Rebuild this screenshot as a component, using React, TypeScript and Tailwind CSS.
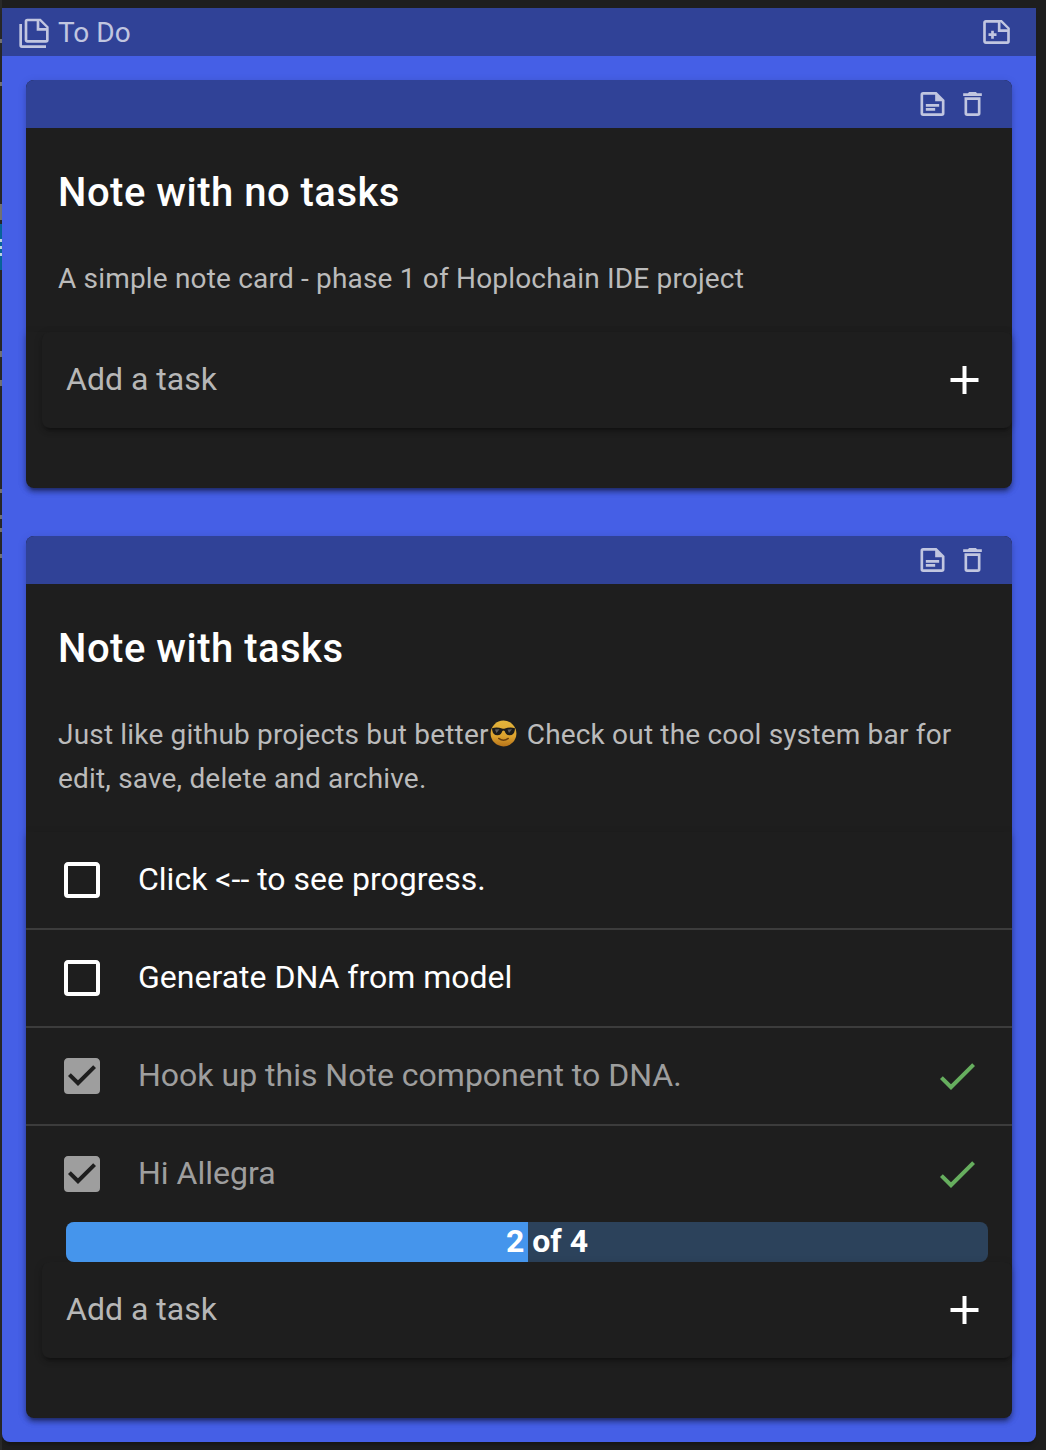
import React from "react";

const ICONS = {
  notes:
    "M3,6V22H21V24H3A2,2 0 0,1 1,22V6H3M16,9H21.5L16,3.5V9M7,2H17L23,8V18A2,2 0 0,1 21,20H7C5.89,20 5,19.1 5,18V4A2,2 0 0,1 7,2M7,4V18H21V11H14V4H7Z",
  notePlus:
    "M15,10H20.5L15,4.5V10M4,3H16L22,9V19A2,2 0 0,1 20,21H4C2.89,21 2,20.1 2,19V5C2,3.89 2.89,3 4,3M4,5V19H20V12H13V5H4M8,17V15H6V13H8V11H10V13H12V15H10V17H8Z",
  noteText:
    "M15,3H5A2,2 0 0,0 3,5V19A2,2 0 0,0 5,21H19A2,2 0 0,0 21,19V9L15,3M19,19H5V5H14V10H19M17,14H7V12H17M14,17H7V15H14",
  trash:
    "M6,19A2,2 0 0,0 8,21H16A2,2 0 0,0 18,19V7H6V19M8,9H16V19H8V9M15.5,4L14.5,3H9.5L8.5,4H5V6H19V4H15.5Z",
  plus: "M19,13H13V19H11V13H5V11H11V5H13V11H19V13Z",
  check: "M21,7L9,19L3.5,13.5L4.91,12.09L9,16.17L19.59,5.59L21,7Z",
  boxOff:
    "M19,3H5C3.89,3 3,3.89 3,5V19A2,2 0 0,0 5,21H19A2,2 0 0,0 21,19V5C21,3.89 20.1,3 19,3M19,5V19H5V5H19Z",
  boxOn:
    "M10,17L5,12L6.41,10.58L10,14.17L17.59,6.58L19,8M19,3H5C3.89,3 3,3.89 3,5V19A2,2 0 0,0 5,21H19A2,2 0 0,0 21,19V5C21,3.89 20.1,3 19,3Z",
};

function Icon({ name, className }: { name: keyof typeof ICONS; className: string }) {
  return (
    <svg viewBox="0 0 24 24" fill="currentColor" className={`shrink-0 ${className}`}>
      <path d={ICONS[name]} />
    </svg>
  );
}

function CoolFace() {
  return (
    <svg viewBox="0 0 27 27" className="mr-[3px] ml-px inline-block size-[27px] align-[-3px]">
      <defs>
        <linearGradient id="face" x1="0" y1="0" x2="0" y2="1">
          <stop offset="0" stopColor="#e3b53c" />
          <stop offset="0.6" stopColor="#dda32e" />
          <stop offset="1" stopColor="#b8741a" />
        </linearGradient>
      </defs>
      <circle cx="13.5" cy="13.5" r="12.9" fill="url(#face)" />
      <path
        d="M2 8.2Q7 6.8 12 8.5Q13.5 9 15 8.5Q20 6.8 25 8.2L24.8 10.3C24.2 13.8 22.6 15.3 19.6 15.3C16.6 15.3 15.3 13.2 14.6 11Q13.5 10 12.4 11C11.7 13.2 10.4 15.3 7.4 15.3C4.4 15.3 2.8 13.8 2.2 10.3Z"
        fill="#1b1b1b"
      />
      <path d="M5 9.6L9.5 9.2L6.5 13ZM17.5 9.6L22 9.2L19 13Z" fill="#5b5b5b" />
      <path d="M8.7 18.4Q13.5 22 18.3 18.4" fill="none" stroke="#6b400d" strokeWidth="1.4" strokeLinecap="round" />
    </svg>
  );
}

function AddTask() {
  return (
    <div className="ml-4 flex h-24 items-center justify-between rounded-lg bg-[#1e1e1e] pr-6 pl-6 text-[32px] text-[#b7b7b7] shadow-[0_6px_2px_-4px_rgba(0,0,0,0.2),0_4px_4px_0_rgba(0,0,0,0.14),0_2px_10px_0_rgba(0,0,0,0.12)]">
      <span className="pb-0.5">Add a task</span>
      <Icon name="plus" className="size-12 translate-x-[0.5px] text-white" />
    </div>
  );
}

function Card({ title, text, children }: { title: string; text: React.ReactNode; children: React.ReactNode }) {
  return (
    <section className="rounded-lg bg-[#1e1e1e] shadow-[0_6px_2px_-4px_rgba(0,0,0,0.2),0_4px_4px_0_rgba(0,0,0,0.14),0_2px_10px_0_rgba(0,0,0,0.12)]">
      <header className="flex h-12 items-center justify-end gap-2 rounded-t-lg bg-[#304297] pr-6 text-[#c1c6e0]">
        <Icon name="noteText" className="size-8 translate-x-[0.5px]" />
        <Icon name="trash" className="size-8 translate-x-[0.5px]" />
      </header>
      <h2 className="px-8 pt-[33px] text-[40px] leading-[64px] font-medium tracking-[0.5px] text-white">{title}</h2>
      <p className="px-8 pt-8 pb-[31px] text-[28px] leading-[44px] tracking-[0.18px] text-[#bbbbbb]">{text}</p>
      <div className="rounded-b-lg pb-[60px] shadow-[0_4px_4px_0_rgba(0,0,0,0.14),0_2px_10px_0_rgba(0,0,0,0.12)]">
        {children}
      </div>
    </section>
  );
}

const TASKS = [
  { text: "Click <-- to see progress.", done: false },
  { text: "Generate DNA from model", done: false },
  { text: "Hook up this Note component to DNA.", done: true },
  { text: "Hi Allegra", done: true },
];

function TaskRow({ text, done }: { text: string; done: boolean }) {
  return (
    <li className="flex h-[98px] items-center border-b-2 border-[#3c3c3c] pr-[31px] pl-8 text-[32px] last:h-24 last:border-b-0">
      <Icon name={done ? "boxOn" : "boxOff"} className={done ? "size-12 text-[#9e9e9e]" : "size-12 text-white"} />
      <span className={done ? "ml-8 grow pb-0.5 text-[#9e9e9e]" : "ml-8 grow pb-0.5 text-white"}>{text}</span>
      {done && <Icon name="check" className="size-12 text-[#66ae5e]" />}
    </li>
  );
}

const UPPER_MARKS = ["mt-[31px] h-1", "mt-[39px] h-1", "mt-[118px] h-4"];
const LOWER_MARKS = ["mt-[81px] h-1.5", "mt-[23px] h-1.5", "mt-[103px] h-1", "mt-[22px] h-1", "mt-[9px] h-1", "mt-[22px] h-1"];

export default function App() {
  return (
    <div className="flex h-[1450px] w-[1046px] overflow-hidden bg-[#1e1e1e] font-['Roboto',sans-serif]">
      <div className="w-0.5 shrink-0 bg-[#292929] pt-2">
        {UPPER_MARKS.map((mark, i) => (
          <div key={i} className={`w-0.5 bg-[#777777] ${mark}`} />
        ))}
        <div className="mt-1 flex h-[46px] flex-col justify-center gap-1 bg-[#0868a0]">
          <div className="h-[3px] bg-[#c5dce8]" />
          <div className="h-[3px] bg-[#c5dce8]" />
          <div className="h-[3px] bg-[#c5dce8]" />
        </div>
        {LOWER_MARKS.map((mark, i) => (
          <div key={i} className={`w-0.5 bg-[#777777] ${mark}`} />
        ))}
      </div>
      <main className="mt-2 h-[1434px] w-[1034px] rounded-b-lg bg-[#455fe6] shadow-[0_6px_2px_-4px_rgba(0,0,0,0.2),0_4px_4px_0_rgba(0,0,0,0.14)]">
        <header className="flex h-12 items-center bg-[#304297] pr-6 pl-4 text-[28px] text-[#c1c6e0]">
          <Icon name="notes" className="size-8" />
          <span className="ml-2 grow pt-0.5">To Do</span>
          <Icon name="notePlus" className="size-8 translate-x-[0.5px]" />
        </header>
        <div className="flex flex-col gap-12 p-6">
          <Card title="Note with no tasks" text="A simple note card - phase 1 of Hoplochain IDE project">
            <AddTask />
          </Card>
          <Card
            title="Note with tasks"
            text={
              <>
                Just like github projects but better
                <CoolFace /> Check out the cool system bar for edit, save, delete and archive.
              </>
            }
          >
            <ul>
              {TASKS.map((t) => (
                <TaskRow key={t.text} {...t} />
              ))}
            </ul>
            <div className="mr-6 ml-10 grid h-10 overflow-hidden rounded-lg bg-[#2c425b]">
              <div className="col-start-1 row-start-1 w-[462px] bg-[#4595ec]" />
              <strong className="col-start-1 row-start-1 pl-10 text-center text-[32px] leading-[38px] font-bold text-white">
                2 of 4
              </strong>
            </div>
            <AddTask />
          </Card>
        </div>
      </main>
    </div>
  );
}
